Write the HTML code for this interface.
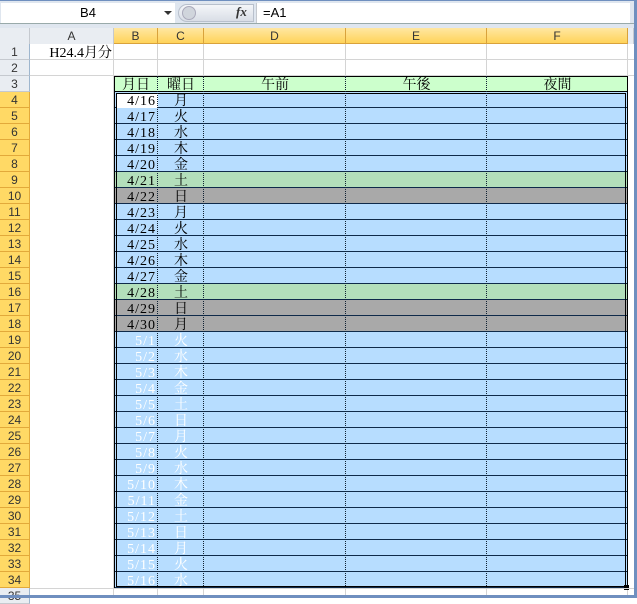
<!DOCTYPE html>
<html><head><meta charset="utf-8"><style>
*{margin:0;padding:0;box-sizing:border-box}
body{width:637px;height:598px;position:relative;background:#fff;overflow:hidden;font-family:"Liberation Sans","Noto Sans CJK JP",sans-serif}
.a{position:absolute}
.fb{left:0;top:0;width:637px;height:28px;background:#dfe6ef;border-top:1px solid #6f8fbf}
.nb{left:1px;top:3px;width:174px;height:20px;background:#fff;font-size:13px;text-align:center;line-height:20px;color:#000}
.ch{top:28px;height:16px;font-size:12px;text-align:center;line-height:16px;color:#333;border-right:1px solid #c5c9cf;background:#e9edf2}
.chs{background:linear-gradient(#ffe7a2,#ffd35a);border-right:1px solid #d9a23b;border-bottom:1px solid #d9a23b;color:#333}
.rh{left:0;width:30px;height:16px;font-size:12px;text-align:center;line-height:16px;color:#333;background:#e9edf2;border-bottom:1px solid #c5c9cf;border-right:1px solid #9eb6ce}
.rhs{background:#ffd965;border-bottom:1px solid #e2a93a;border-right:1px solid #e2a93a}
.gl{background:#d4d4d4}
.c{height:16px;font-family:"Liberation Serif","Noto Serif CJK SC",serif;font-size:14px;line-height:19px}
.dt{letter-spacing:1px}
</style></head><body>
<div class="a fb"></div>
<div class="a nb">B4</div>
<div class="a" style="left:164px;top:11px;width:0;height:0;border-left:4px solid transparent;border-right:4px solid transparent;border-top:4px solid #333"></div>
<div class="a" style="left:178px;top:4px;width:76px;height:18px;background:linear-gradient(#f4f6f9,#d9dee6);border-radius:9px 0 0 9px;border:1px solid #b8c0cc"></div>
<div class="a" style="left:182px;top:6px;width:14px;height:14px;border-radius:7px;background:#d0d5dc;border:1px solid #aab"></div>
<div class="a" style="left:236px;top:4px;font:italic bold 13px 'Liberation Serif',serif;color:#333">fx</div>
<div class="a" style="left:256px;top:3px;width:374px;height:20px;background:#fff;font-size:13px;line-height:20px;padding-left:6px;border-left:1px solid #c5c9cf">=A1</div>
<div class="a" style="left:634px;top:0;width:3px;height:598px;background:#6f8fbf"></div>
<div class="a" style="left:0;top:23px;width:634px;height:1px;background:#9aa"></div>
<div class="a ch" style="left:0;width:30px"></div>
<div class="a ch" style="left:30px;width:84px">A</div>
<div class="a ch chs" style="left:114px;width:44px">B</div>
<div class="a ch chs" style="left:158px;width:46px">C</div>
<div class="a ch chs" style="left:204px;width:142px">D</div>
<div class="a ch chs" style="left:346px;width:141px">E</div>
<div class="a ch chs" style="left:487px;width:141px">F</div>
<div class="a ch" style="left:628px;width:6px"></div>
<div class="a gl" style="left:113px;top:44px;width:1px;height:551px"></div>
<div class="a gl" style="left:157px;top:44px;width:1px;height:551px"></div>
<div class="a gl" style="left:203px;top:44px;width:1px;height:551px"></div>
<div class="a gl" style="left:345px;top:44px;width:1px;height:551px"></div>
<div class="a gl" style="left:486px;top:44px;width:1px;height:551px"></div>
<div class="a gl" style="left:627px;top:44px;width:1px;height:551px"></div>
<div class="a gl" style="left:30px;top:59px;width:604px;height:1px"></div>
<div class="a gl" style="left:30px;top:75px;width:604px;height:1px"></div>
<div class="a c" style="left:30px;top:44px;width:82px;text-align:right">H24.4月分</div>
<div class="a" style="left:114px;top:76px;width:514px;height:16px;background:#ccffcc;border:1px solid #000"></div>
<div class="a c" style="left:114px;top:76px;width:44px;text-align:center">月日</div>
<div class="a c" style="left:158px;top:76px;width:46px;text-align:center">曜日</div>
<div class="a c" style="left:204px;top:76px;width:142px;text-align:center">午前</div>
<div class="a c" style="left:346px;top:76px;width:141px;text-align:center">午後</div>
<div class="a c" style="left:487px;top:76px;width:141px;text-align:center">夜間</div>
<div id="rows"></div>
<div class="a" style="left:114px;top:91px;width:514px;height:498px;border:3px double #000"></div>
<div class="a" style="left:157px;top:76px;width:0;height:512px;border-left:1px dotted #123"></div>
<div class="a" style="left:203px;top:76px;width:0;height:512px;border-left:1px dotted #123"></div>
<div class="a" style="left:345px;top:76px;width:0;height:512px;border-left:1px dotted #123"></div>
<div class="a" style="left:486px;top:76px;width:0;height:512px;border-left:1px dotted #123"></div>
<div class="a" style="left:624px;top:585px;width:5px;height:5px;background:#000"></div>
<div class="a rh" style="top:44px">1</div>
<div class="a rh" style="top:60px">2</div>
<div class="a rh" style="top:76px">3</div>
<div class="a rh" style="top:588px">35</div>
<div class="a gl" style="left:30px;top:588px;width:604px;height:1px"></div>
<div class="a" style="left:0;top:595px;width:637px;height:3px;background:#6f8fbf"></div>
<div class="a rh rhs" style="top:92px">4</div><div class="a rh rhs" style="top:108px">5</div><div class="a rh rhs" style="top:124px">6</div><div class="a rh rhs" style="top:140px">7</div><div class="a rh rhs" style="top:156px">8</div><div class="a rh rhs" style="top:172px">9</div><div class="a rh rhs" style="top:188px">10</div><div class="a rh rhs" style="top:204px">11</div><div class="a rh rhs" style="top:220px">12</div><div class="a rh rhs" style="top:236px">13</div><div class="a rh rhs" style="top:252px">14</div><div class="a rh rhs" style="top:268px">15</div><div class="a rh rhs" style="top:284px">16</div><div class="a rh rhs" style="top:300px">17</div><div class="a rh rhs" style="top:316px">18</div><div class="a rh rhs" style="top:332px">19</div><div class="a rh rhs" style="top:348px">20</div><div class="a rh rhs" style="top:364px">21</div><div class="a rh rhs" style="top:380px">22</div><div class="a rh rhs" style="top:396px">23</div><div class="a rh rhs" style="top:412px">24</div><div class="a rh rhs" style="top:428px">25</div><div class="a rh rhs" style="top:444px">26</div><div class="a rh rhs" style="top:460px">27</div><div class="a rh rhs" style="top:476px">28</div><div class="a rh rhs" style="top:492px">29</div><div class="a rh rhs" style="top:508px">30</div><div class="a rh rhs" style="top:524px">31</div><div class="a rh rhs" style="top:540px">32</div><div class="a rh rhs" style="top:556px">33</div><div class="a rh rhs" style="top:572px">34</div>
<script>
var d=[["4/16","月"],["4/17","火"],["4/18","水"],["4/19","木"],["4/20","金"],["4/21","土"],["4/22","日"],["4/23","月"],["4/24","火"],["4/25","水"],["4/26","木"],["4/27","金"],["4/28","土"],["4/29","日"],["4/30","月"],["5/1","火"],["5/2","水"],["5/3","木"],["5/4","金"],["5/5","土"],["5/6","日"],["5/7","月"],["5/8","火"],["5/9","水"],["5/10","木"],["5/11","金"],["5/12","土"],["5/13","日"],["5/14","月"],["5/15","火"],["5/16","水"]];
var h="";
for(var i=0;i<d.length;i++){var t=92+i*16;var bg="#b7ddff";var s=d[i][1];
if(s=="土"&&i<15)bg="#b3dfbb";if((s=="日"||i==14)&&i<15)bg="#a9a9a9";
var col=i>=15?"#fff":"#000";
h+='<div class="a" style="left:114px;top:'+t+'px;width:514px;height:16px;background:'+bg+';border-bottom:1px solid #0f2a4a"></div>';
if(i==0)h+='<div class="a" style="left:116px;top:93px;width:42px;height:15px;background:#fff"></div>';
h+='<div class="a c dt" style="left:114px;top:'+t+'px;width:42px;text-align:right;color:'+col+'">'+d[i][0]+'</div>';
h+='<div class="a c" style="left:158px;top:'+t+'px;width:46px;text-align:center;color:'+col+'">'+s+'</div>';}
document.getElementById("rows").outerHTML=h;
</script>
</body></html>
